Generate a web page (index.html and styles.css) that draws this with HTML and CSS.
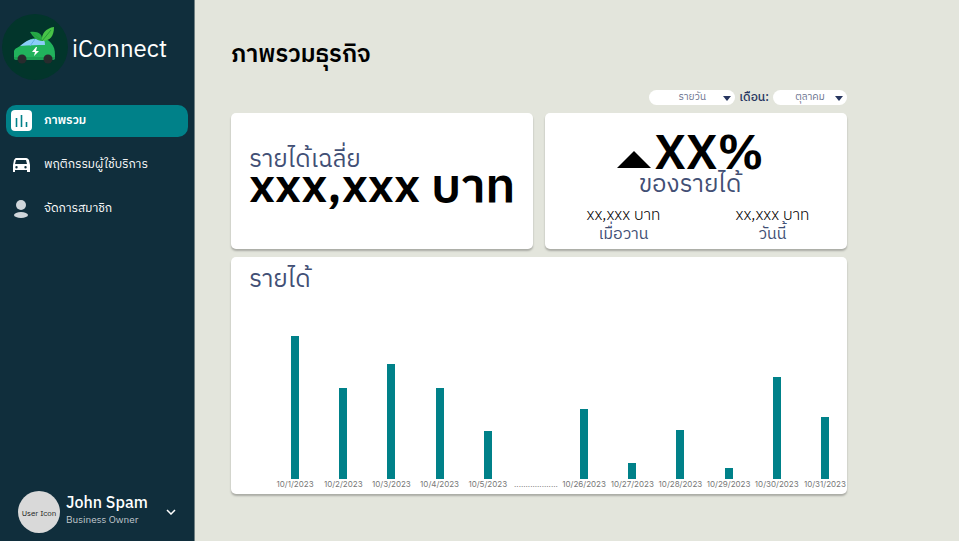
FILE: index.html
```html
<!DOCTYPE html>
<html lang="th">
<head>
<meta charset="utf-8">
<meta name="viewport" content="width=device-width, initial-scale=1">
<title>iConnect</title>
<link rel="stylesheet" href="styles.css">
</head>
<body>
<div class="app">
  <aside class="sidebar">
    <a class="brand" href="#">
      <svg class="brand-logo" viewBox="0 0 66 66" aria-hidden="true">
        <circle cx="33" cy="33" r="33" fill="#02352b"/>
        <path d="M12 44v-7c1-3 5-4 8-6 5-4 9-7 15-7 8 0 12 2 14 5 3 3 4 7 4 12v3c0 1-1 2-3 2H15c-2 0-3-1-3-2z" fill="#21b35c"/>
        <path d="M18 32c5-4 9-7 14-7h8c2 0 3 2 3 6-8 0-16 0-25 1z" fill="#8bcdf8"/>
        <path d="M28 32l5-7" stroke="#5faee2" stroke-width="1"/>
        <path d="M12 43h41v1c0 1-1 2-3 2H15c-2 0-3-1-3-2z" fill="#1ba052"/>
        <path d="M40 27C35 27 31 23 28 18c8-1 13 2 12 9z" fill="#25a846"/>
        <path d="M40 27c-1-7 4-13 12-14 0 9-4 14-12 14z" fill="#48c447"/>
        <path d="M40 27l9-11M39 26l-8-6" stroke="#239c3c" stroke-width="1"/>
        <path d="M34 33l-4 5h3l-1 4 5-5h-3l1-4z" fill="#fff"/>
        <circle cx="20" cy="45" r="4.500" fill="#282b2d"/>
        <circle cx="46" cy="45" r="4.500" fill="#282b2d"/>
      </svg>
      <span class="brand-name">iConnect</span>
    </a>
    <nav class="menu">
      <a class="menu-item active" href="#" aria-current="page">
        <svg class="menu-icon" viewBox="0 0 22 22" aria-hidden="true">
          <rect x="1" y="0" width="21" height="21" rx="4" fill="#fff"/>
          <path d="M6.500 8v9M11.500 5v12M16.500 12v5" stroke="#008189" stroke-width="1.600"/>
        </svg>
        <span>ภาพรวม</span>
      </a>
      <a class="menu-item" href="#">
        <svg class="menu-icon" viewBox="0 0 22 22" aria-hidden="true">
          <path fill="#fff" fill-rule="evenodd" d="M6 4h10c2 0 2 1 3 2l1 5v7h-3v-2H5v2H3v-7l1-5c1-1 1-2 2-2zM6 6l-1 4h12l-1-4zM6.500 12a1.200 1.200 0 0 0 0 2.400 1.200 1.200 0 0 0 0-2.400zM15.500 12a1.200 1.200 0 0 0 0 2.400 1.200 1.200 0 0 0 0-2.400z"/>
        </svg>
        <span>พฤติกรรมผู้ใช้บริการ</span>
      </a>
      <a class="menu-item" href="#">
        <svg class="menu-icon" viewBox="0 0 22 22" aria-hidden="true">
          <circle cx="11" cy="7" r="5" fill="#d0d6db"/>
          <ellipse cx="11" cy="17" rx="7" ry="3" fill="#d0d6db"/>
        </svg>
        <span>จัดการสมาชิก</span>
      </a>
    </nav>
    <button class="account" type="button">
      <span class="avatar">User Icon</span>
      <span class="account-text">
        <span class="account-name">John Spam</span>
        <span class="account-role">Business Owner</span>
      </span>
      <svg class="account-arrow" viewBox="0 0 10 6" aria-hidden="true"><path d="M1 1l4 4 4-4" fill="none" stroke="#fff" stroke-width="1.5"/></svg>
    </button>
  </aside>

  <main class="content">
    <h1 class="page-title">ภาพรวมธุรกิจ</h1>
    <form class="filters">
      <span class="picker picker-wide">
        <select aria-label="รายวัน"><option>รายวัน</option></select>
        <svg class="picker-arrow" viewBox="0 0 8 5" aria-hidden="true"><path d="M0 0h8L4 5z" fill="#27365f"/></svg>
      </span>
      <label class="filter-label" for="month">เดือน:</label>
      <span class="picker">
        <select id="month"><option>ตุลาคม</option></select>
        <svg class="picker-arrow" viewBox="0 0 8 5" aria-hidden="true"><path d="M0 0h8L4 5z" fill="#27365f"/></svg>
      </span>
    </form>
    <div class="summary">
      <section class="card average">
        <h2 class="card-title">รายได้เฉลี่ย</h2>
        <p class="figure">xxx,xxx บาท</p>
      </section>
      <section class="card change">
        <div class="change-head">
          <p class="figure change-figure">
            <svg class="up" viewBox="0 0 34 17" aria-hidden="true"><path d="M0 17L17 0l17 17z"/></svg>XX%
          </p>
          <h2 class="card-title">ของรายได้</h2>
        </div>
        <dl class="compare">
          <div class="compare-item"><dd>xx,xxx บาท</dd><dt>เมื่อวาน</dt></div>
          <div class="compare-item"><dd>xx,xxx บาท</dd><dt>วันนี้</dt></div>
        </dl>
      </section>
    </div>
    <section class="card revenue">
      <h2 class="card-title">รายได้</h2>
      <div class="chart">
        <div class="day"><i class="bar" style="height:143px"></i><span>10/1/2023</span></div>
        <div class="day"><i class="bar" style="height:91px"></i><span>10/2/2023</span></div>
        <div class="day"><i class="bar" style="height:115px"></i><span>10/3/2023</span></div>
        <div class="day"><i class="bar" style="height:91px"></i><span>10/4/2023</span></div>
        <div class="day"><i class="bar" style="height:48px"></i><span>10/5/2023</span></div>
        <div class="day"><span>...................</span></div>
        <div class="day"><i class="bar" style="height:70px"></i><span>10/26/2023</span></div>
        <div class="day"><i class="bar" style="height:16px"></i><span>10/27/2023</span></div>
        <div class="day"><i class="bar" style="height:49px"></i><span>10/28/2023</span></div>
        <div class="day"><i class="bar" style="height:11px"></i><span>10/29/2023</span></div>
        <div class="day"><i class="bar" style="height:102px"></i><span>10/30/2023</span></div>
        <div class="day"><i class="bar" style="height:62px"></i><span>10/31/2023</span></div>
      </div>
    </section>
  </main>
</div>
</body>
</html>
```
FILE: styles.css
```css
* { box-sizing: border-box; }

body {
  margin: 0;
  background: #fff;
  color: #000;
  font-family: "IBM Plex Sans Thai", "IBM Plex Sans", "Noto Sans Thai", "Noto Sans", sans-serif;
}

h1, h2, p, dl, dd { margin: 0; }
a { color: inherit; text-decoration: none; }

.app {
  display: flex;
  min-height: calc(100vh - 1px);
  background: #e3e5dc;
}

.sidebar {
  display: flex;
  flex: 0 0 195px;
  flex-direction: column;
  padding: 14px 6px 8px;
  border-right: 1px solid #708082;
  background: #102e3c;
  color: #fff;
}

.brand { display: flex; align-items: center; gap: 4px; margin-left: -4px; }
.brand-logo { width: 66px; height: 66px; }
.brand-name { padding-top: 6px; font-size: 24px; line-height: 30px; font-weight: 400; }

.menu { display: flex; flex-direction: column; gap: 12px; margin-top: 25px; }
.menu-item {
  display: flex;
  align-items: center;
  gap: 12px;
  height: 32px;
  padding: 0 4px;
  border-radius: 10px;
  font-size: 12px;
  line-height: 16px;
}
.menu-item.active { background: #008189; font-weight: 600; }
.menu-icon { width: 22px; height: 22px; }

.account {
  display: flex;
  align-items: center;
  gap: 6px;
  margin-top: auto;
  padding: 0 12px;
  border: 0;
  background: none;
  color: #fff;
  font: inherit;
  text-align: left;
}
.avatar {
  flex: none;
  width: 42px;
  height: 42px;
  border-radius: 50%;
  background: #d9d9d9;
  color: #222;
  font-size: 8px;
  line-height: 46px;
  text-align: center;
}
.account-text { display: flex; flex: 1; flex-direction: column; padding-bottom: 4px; white-space: nowrap; }
.account-name { font-size: 16px; line-height: 20px; font-weight: 500; }
.account-role { color: #c3cbd0; font-size: 10px; line-height: 12px; }
.account-arrow { width: 10px; height: 6px; }

.content { flex: 1; min-width: 0; padding: 37px 112px 46px 36px; }
.page-title { font-size: 24px; line-height: 36px; font-weight: 600; }

.filters {
  display: flex;
  align-items: center;
  justify-content: flex-end;
  gap: 4px;
  height: 15px;
  margin-top: 17px;
}
.picker { position: relative; width: 74px; height: 15px; }
.picker-wide { width: 86px; }
.picker select {
  display: block;
  width: 100%;
  height: 15px;
  padding: 0;
  border: 0;
  border-radius: 8px;
  appearance: none;
  background: #fff;
  color: #68718d;
  font: inherit;
  font-size: 10px;
  line-height: 15px;
  text-align: center;
  text-align-last: center;
}
.picker-arrow { position: absolute; top: 6px; right: 4px; width: 8px; height: 5px; }
.filter-label { color: #27365f; font-size: 12px; line-height: 15px; font-weight: 500; }

.card {
  border-radius: 5px;
  background: #fff;
  box-shadow: 0 2px 2px rgba(0, 0, 0, .25);
}
.card-title { color: #424f75; font-size: 24px; line-height: 28px; font-weight: 400; }
.figure { font-size: 48px; line-height: 48px; font-weight: 600; white-space: nowrap; }

.summary {
  display: grid;
  grid-template-columns: repeat(2, minmax(0, 1fr));
  gap: 12px;
  margin-top: 8px;
}
.average { padding: 33px 18px 32px; }
.average .figure { margin-top: -10px; }
.change { padding: 18px 0 4px; text-align: center; }
.change-head { padding-right: 12px; }
.change-figure { display: flex; align-items: center; justify-content: center; gap: 4px; }
.up { width: 34px; height: 17px; margin-top: 8px; }
.change .card-title { margin-top: -8px; }
.compare {
  display: grid;
  grid-template-columns: 1fr 1fr;
  margin-top: 7px;
  padding-left: 4px;
}
.compare-item { display: flex; flex-direction: column; }
.compare dd { font-size: 16px; line-height: 19px; font-weight: 300; }
.compare dt { color: #424f75; font-size: 16px; line-height: 20px; font-weight: 400; }

.revenue { margin-top: 8px; padding: 9px 0 5px; }
.revenue .card-title { padding-left: 18px; }
.chart {
  display: grid;
  grid-template-columns: repeat(12, 1fr);
  height: 195px;
  margin: 0 -2px 0 40px;
}
.day {
  display: flex;
  flex-direction: column;
  align-items: center;
  justify-content: flex-end;
  min-width: 0;
  color: #777;
  font-family: Inter, sans-serif;
  font-size: 8px;
  line-height: 10px;
  white-space: nowrap;
}
.bar { width: 8px; background: #008189; }
```
